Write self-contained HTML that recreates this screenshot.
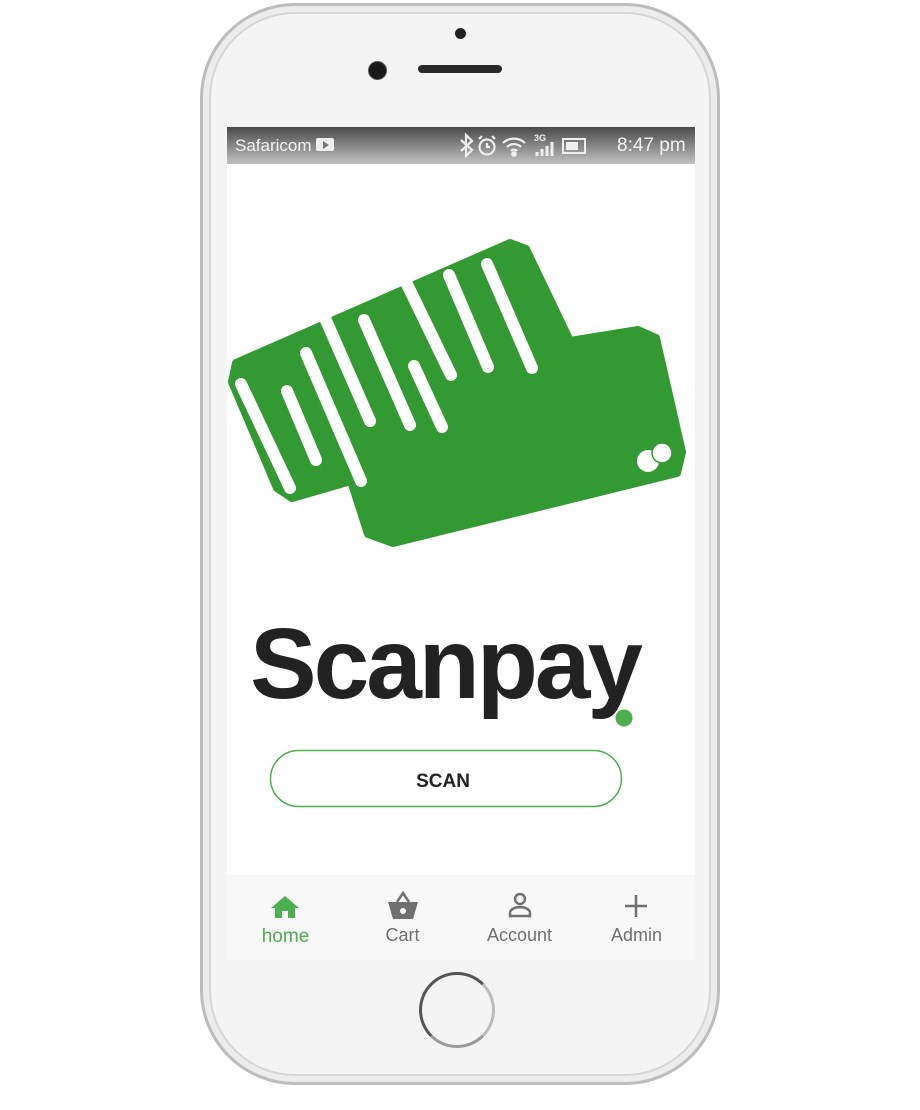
<!DOCTYPE html>
<html><head><meta charset="utf-8"><style>
html,body{margin:0;padding:0;background:#fff;}
body{width:920px;height:1110px;position:relative;overflow:hidden;font-family:"Liberation Sans",sans-serif;}
.phone{position:absolute;left:200px;top:3px;width:520px;height:1082px;border-radius:95px;background:#f4f4f4;border:3px solid #bdbdbd;box-sizing:border-box;box-shadow:inset 0 0 0 6px #ececec,inset 0 0 0 8px #d6d6d6;}
.screen{position:absolute;left:227px;top:127px;width:468px;height:833px;background:#fff;}
.status{position:absolute;left:0;top:0;width:468px;height:37px;background:linear-gradient(#4a4a4a,#c2c2c2);color:#f2f2f2;font-size:17px;}
.nav{position:absolute;left:0;top:748px;width:468px;height:85px;background:#f8f8f8;}
.nav div{position:absolute;top:50px;width:117px;text-align:center;font-size:18px;color:#707070;}
</style></head><body>
<div class="phone"></div>
<div style="position:absolute;left:455px;top:28px;width:11px;height:11px;border-radius:50%;background:#222;"></div>
<div style="position:absolute;left:368px;top:61px;width:17px;height:17px;border-radius:50%;background:#1a1a1a;border:1px solid #555;"></div>
<div style="position:absolute;left:418px;top:65px;width:84px;height:8px;border-radius:4px;background:#2a2a2a;"></div>
<div style="position:absolute;left:419px;top:972px;width:76px;height:76px;border-radius:50%;border:3px solid #555;border-bottom-color:#999;border-right-color:#bbb;box-sizing:border-box;"></div>
<div class="screen">
 <div class="status">
  <span style="position:absolute;left:8px;top:9px;">Safaricom</span>
  <span style="position:absolute;left:89px;top:11px;width:18px;height:13px;background:#eee;border-radius:2px;"></span>
  <span style="position:absolute;left:96px;top:14px;width:0;height:0;border-left:6px solid #777;border-top:4px solid transparent;border-bottom:4px solid transparent;"></span>
  <svg style="position:absolute;left:232px;top:5px" width="130" height="28" viewBox="0 0 130 28" fill="none" stroke="#eee" stroke-width="2.2">
   <path d="M2 8l11 10-6 6V3l6 6-11 10"/>
   <circle cx="28" cy="15" r="7.5"/><path d="M28 11v4h3M20 7l3-3M36 7l-3-3"/>
   <path d="M44 11a16 16 0 0 1 22 0M48 15a10 10 0 0 1 14 0M52 19a4 4 0 0 1 6 0"/><circle cx="55" cy="22" r="1.8" fill="#eee"/>
   <text x="75" y="9" font-size="9" fill="#eee" stroke="none" font-weight="bold">3G</text>
   <path d="M78 24v-4M83 24v-7M88 24v-10M93 24v-14" stroke-width="3"/>
   <rect x="104" y="7" width="22" height="14" stroke-width="2"/><rect x="107" y="10" width="12" height="8" fill="#eee" stroke="none"/>
  </svg>
  <span style="position:absolute;left:390px;top:8px;font-size:19px;">8:47 pm</span>
 </div>
 <div class="nav">
  <svg style="position:absolute;left:43px;top:20px" width="30" height="24" viewBox="0 0 30 24"><path d="M15 1L1 13h4v10h7v-7h6v7h7V13h4z" fill="#4caf50"/></svg>
  <svg style="position:absolute;left:159px;top:16px" width="34" height="30" viewBox="0 0 34 30"><path d="M11 11l6-9 6 9" fill="none" stroke="#707070" stroke-width="2.5"/><path d="M2 11h30l-5 17H7z" fill="#707070"/><circle cx="17" cy="20" r="3" fill="#f8f8f8"/></svg>
  <svg style="position:absolute;left:281px;top:17px" width="24" height="26" viewBox="0 0 24 26" fill="none" stroke="#707070" stroke-width="2.4"><circle cx="12" cy="7" r="5"/><path d="M2 24v-3c0-4 6-6 10-6s10 2 10 6v3z"/></svg>
  <svg style="position:absolute;left:397px;top:19px" width="24" height="24" viewBox="0 0 24 24" stroke="#707070" stroke-width="2.5"><path d="M12 1v22M1 12h22"/></svg>
  <div style="left:0;color:#4caf50;font-size:19px;top:51px">home</div>
  <div style="left:117px">Cart</div>
  <div style="left:234px">Account</div>
  <div style="left:351px">Admin</div>
 </div>
</div>
<svg style="position:absolute;left:0;top:0" width="920" height="1110" viewBox="0 0 920 1110">
 <path d="M236 363 L510 243 L526 249 L570 341 L638 330 L656 338 L682 452 L677 473 L393 543 L368 534 L351 481 L292 498 L277 488 L232 382 Z" fill="#339933" stroke="#339933" stroke-width="8" stroke-linejoin="round"/>
 <g stroke="#fff" stroke-width="12" stroke-linecap="round">
  <path d="M241 384L290 488M287 391L316 460M306 353L361 481M325 318L370 421M364 320L410 425M414 366L442 427M405 280L451 375M449 275L488 367M487 264L532 368"/>
 </g>
 <circle cx="648" cy="461" r="11" fill="#fff"/><circle cx="662" cy="453" r="10" fill="#fff" stroke="#339933" stroke-width="1.5"/>
 <text x="250" y="698" font-size="100" font-weight="bold" fill="#222" letter-spacing="-3" font-family="Liberation Sans, sans-serif" textLength="390" lengthAdjust="spacingAndGlyphs">Scanpay</text>
 <circle cx="624" cy="718" r="8.5" fill="#4caf50"/>
 <rect x="270.5" y="750.5" width="351" height="56" rx="28" fill="#fff" stroke="#4caf50" stroke-width="1.5"/>
 <text x="443" y="787" font-size="19" font-weight="bold" fill="#222" text-anchor="middle" font-family="Liberation Sans, sans-serif">SCAN</text>
</svg>
</body></html>
